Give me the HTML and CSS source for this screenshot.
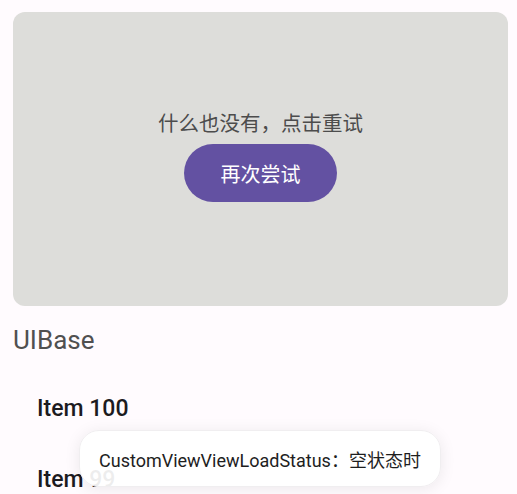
FILE: index.html
```html
<!DOCTYPE html>
<html lang="zh">
<head>
<meta charset="utf-8">
<link rel="stylesheet" href="styles.css">
</head>
<body>
<div class="page">
  <div class="card">
    <div class="empty-text">什么也没有，点击重试</div>
    <button class="retry">再次尝试</button>
  </div>
  <div class="title">UIBase</div>
  <div class="list">
    <div class="item">Item 100</div>
    <div class="item">Item 99</div>
  </div>
</div>
<div class="toast">CustomViewViewLoadStatus：空状态时</div>
</body>
</html>
```
FILE: styles.css
```css
html, body {
  margin: 0;
  padding: 0;
  background: #fffbfe;
  overflow: hidden;
  height: 494px;
}
body {
  font-family: Roboto, "Noto Sans CJK SC", sans-serif;
}
.page {
  display: flex;
  flex-direction: column;
}
.card {
  margin: 12px 9px 0 13px;
  height: 294px;
  box-sizing: border-box;
  background: #ddddda;
  border-radius: 12px;
  display: flex;
  flex-direction: column;
  align-items: center;
  padding-top: 98px;
  gap: 6px;
}
.empty-text {
  font-size: 20.5px;
  line-height: 28px;
  color: #4c4c4c;
}
.retry {
  width: 153px;
  height: 58px;
  border: none;
  border-radius: 29px;
  background: #6351a2;
  color: #ffffff;
  font-family: Roboto, "Noto Sans CJK SC", sans-serif;
  font-size: 20px;
  padding: 0;
}
.title {
  margin: 16px 0 0 13px;
  font-size: 26px;
  line-height: 36px;
  color: #505050;
}
.list {
  margin-top: 15px;
  display: flex;
  flex-direction: column;
}
.item {
  height: 71px;
  display: flex;
  align-items: center;
  padding-left: 37px;
  font-size: 23px;
  font-weight: 500;
  color: #1c1b1f;
}
.toast {
  position: absolute;
  left: 79px;
  top: 430px;
  width: 362px;
  height: 57px;
  box-sizing: border-box;
  border-radius: 20px;
  background: rgba(255, 255, 255, 0.92);
  box-shadow: 0 2px 16px rgba(0, 0, 0, 0.08);
  border: 1px solid #f0eef0;
  display: flex;
  align-items: center;
  padding-left: 19px;
  font-size: 18px;
  color: #1e1e1e;
}
```
